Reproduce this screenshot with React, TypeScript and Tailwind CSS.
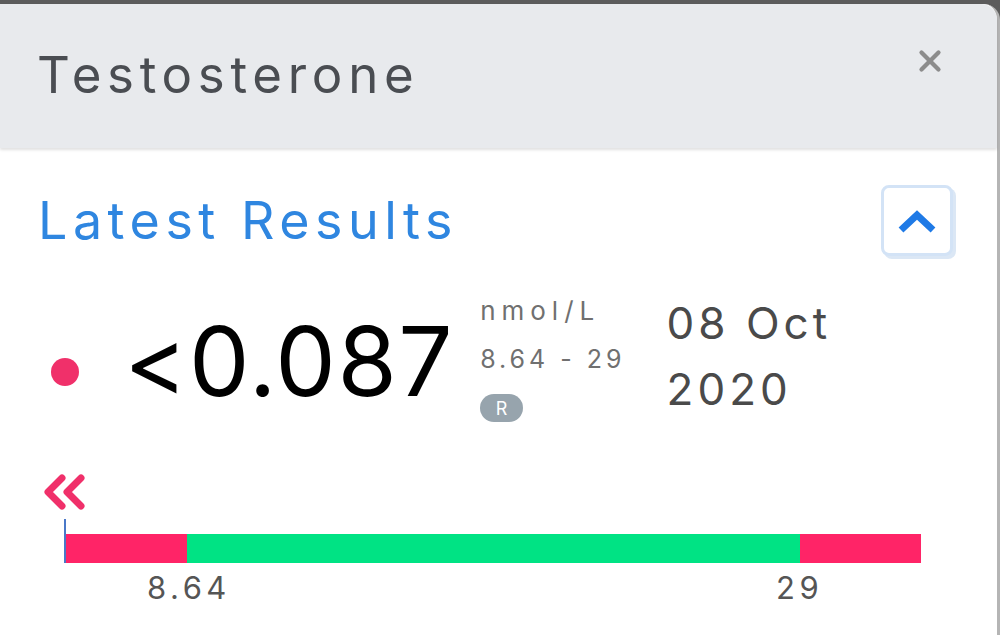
import { X } from "lucide-react"

const font = { fontFamily: "Inter, 'Open Sans', sans-serif" }

const ChevronUp = () => (
  <svg width="40" height="26" viewBox="0 0 40 26" fill="none">
    <path d="M4 22 L20 7 L36 22" stroke="#1f7ae6" strokeWidth="7" strokeLinejoin="miter" />
  </svg>
)

const DoubleLeft = () => (
  <svg width="50" height="38" viewBox="0 0 50 38" fill="none">
    <path d="M23 5 L9 19 L23 33" stroke="#f0306a" strokeWidth="7" strokeLinecap="round" strokeLinejoin="round" />
    <path d="M42 5 L28 19 L42 33" stroke="#f0306a" strokeWidth="7" strokeLinecap="round" strokeLinejoin="round" />
  </svg>
)

const RangeBar = () => (
  <div className="ml-[26px] w-[857px]">
    <div className="flex h-[44px] items-end border-l-[2px] border-[#4a78c8]">
      <div className="flex h-[29px] w-full">
        <div className="w-[121px] bg-[#ff2467]" />
        <div className="w-[613px] bg-[#00e384]" />
        <div className="flex-1 bg-[#ff2467]" />
      </div>
    </div>
    <div className="relative h-[45px] text-[31px] text-[#555] tracking-[4.5px]">
      <span className="absolute left-[83px] top-[9px] leading-none">8.64</span>
      <span className="absolute left-[712px] top-[9px] leading-none">29</span>
    </div>
  </div>
)

export default function App() {
  return (
    <div className="h-[635px] w-[1000px] overflow-hidden bg-[#5c5c5c] pt-[4px]" style={font}>
      <div className="h-full rounded-tr-[16px] border-r-[3px] border-[#b5b5b5] bg-white">
        {/* header */}
        <div className="flex h-[144px] items-start justify-between rounded-tr-[16px] bg-[#e8eaed] pl-[37px] pr-[50px] shadow-[0_2px_3px_rgba(0,0,0,0.12)]">
          <h1 className="mt-[45px] text-[51px] leading-none tracking-[5.7px] text-[#4a4d52]">Testosterone</h1>
          <X className="mt-[40px] h-[34px] w-[34px] text-[#8c8c8c]" strokeWidth={3} />
        </div>

        <div className="pl-[38px] pr-[44px]">
          <div className="mt-[37px] flex h-[71px] items-center justify-between">
            <h2 className="text-[52px] leading-none tracking-[5.5px] text-[#2f86e0]">Latest Results</h2>
            <button className="flex h-[71px] w-[72px] items-center justify-center rounded-[8px] border-[3px] border-[#d3e3f6] bg-white shadow-[3px_3px_0_#dbe7f5]">
              <ChevronUp />
            </button>
          </div>

          <div className="mt-[40px] flex h-[140px] items-start">
            <div className="mt-[62px] ml-[13px] h-[28px] w-[28px] rounded-full bg-[#f0306a]" />
            <div className="ml-[45px] mt-[17px] text-[96px] leading-none tracking-[1.5px] text-black">&lt;0.087</div>
            <div className="ml-[26px] flex flex-col items-start text-[#707070]">
              <span className="mt-[2px] text-[26px] leading-[26px] tracking-[6px]">nmol/L</span>
              <span className="mt-[22px] text-[25px] leading-[26px] tracking-[4px]">8.64 - 29</span>
              <span className="mt-[22px] flex h-[28px] w-[43px] items-center justify-center rounded-full bg-[#97a4ad] text-[18px] text-white">R</span>
            </div>
            <div className="ml-[41px] flex flex-col text-[44px] leading-none tracking-[4px] text-[#4a4a4a]">
              <span className="mt-[5px]">08 Oct</span>
              <span className="mt-[22px]">2020</span>
            </div>
          </div>

          <div className="mt-[37px] ml-[1px]">
            <DoubleLeft />
          </div>
        </div>
        <div className="mt-[8px] pl-[38px]">
          <RangeBar />
        </div>
      </div>
    </div>
  )
}
